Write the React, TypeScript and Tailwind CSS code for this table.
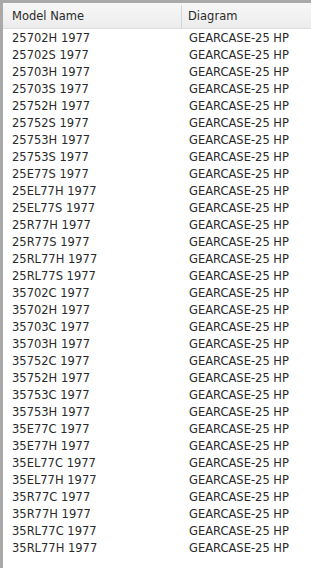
const rows = [
  "25702H 1977",
  "25702S 1977",
  "25703H 1977",
  "25703S 1977",
  "25752H 1977",
  "25752S 1977",
  "25753H 1977",
  "25753S 1977",
  "25E77S 1977",
  "25EL77H 1977",
  "25EL77S 1977",
  "25R77H 1977",
  "25R77S 1977",
  "25RL77H 1977",
  "25RL77S 1977",
  "35702C 1977",
  "35702H 1977",
  "35703C 1977",
  "35703H 1977",
  "35752C 1977",
  "35752H 1977",
  "35753C 1977",
  "35753H 1977",
  "35E77C 1977",
  "35E77H 1977",
  "35EL77C 1977",
  "35EL77H 1977",
  "35R77C 1977",
  "35R77H 1977",
  "35RL77C 1977",
  "35RL77H 1977",
];

export default function App() {
  return (
    <div className="w-[311px] h-[568px] overflow-hidden bg-white border-l-[3px] border-t-[3px] border-[#a9a9a9] font-['DejaVu_Sans',sans-serif] text-[11.5px] text-[#2a2a2a]">
      <div className="flex h-[26px] items-center pt-[2px] bg-gradient-to-b from-[#f7f7f7] to-[#ececec] border-b border-[#dcdcdc]">
        <div className="w-[179px] h-full flex items-center pl-[9px] border-r border-[#d6d6d6]">
          Model Name
        </div>
        <div className="flex-1 pl-[6px]">Diagram</div>
      </div>
      <div className="flex flex-col pt-px">
        {rows.map((name) => (
          <div key={name} className="flex h-[17px] items-center">
            <div className="w-[180px] pl-[9px]">{name}</div>
            <div className="flex-1 pl-[6px]">GEARCASE-25 HP</div>
          </div>
        ))}
      </div>
    </div>
  );
}
